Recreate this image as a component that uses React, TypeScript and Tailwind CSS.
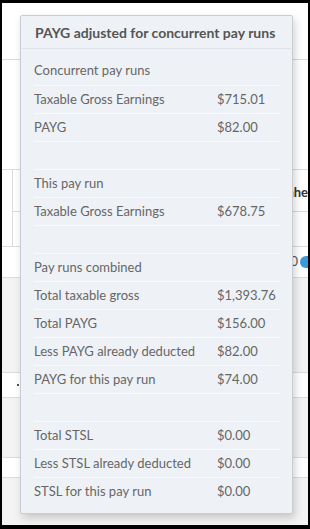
import React from "react";

type Row = { label: string; value?: string } | null;

const rows: Row[] = [
  { label: "Concurrent pay runs" },
  { label: "Taxable Gross Earnings", value: "$715.01" },
  { label: "PAYG", value: "$82.00" },
  null,
  { label: "This pay run" },
  { label: "Taxable Gross Earnings", value: "$678.75" },
  null,
  { label: "Pay runs combined" },
  { label: "Total taxable gross", value: "$1,393.76" },
  { label: "Total PAYG", value: "$156.00" },
  { label: "Less PAYG already deducted", value: "$82.00" },
  { label: "PAYG for this pay run", value: "$74.00" },
  null,
  { label: "Total STSL", value: "$0.00" },
  { label: "Less STSL already deducted", value: "$0.00" },
  { label: "STSL for this pay run", value: "$0.00" },
];

/* background page peeking out behind the popover */
const Background = () => (
  <div className="flex flex-col w-full h-full">
    <div className="h-[57px] border-b border-[#dcdcdc] bg-white" />
    <div className="h-[110px] border-b border-[#dcdcdc] bg-white" />
    <div className="h-[77px] flex bg-white border-b border-[#dcdcdc]">
      <div className="w-[11px] border-r border-[#dcdcdc]" />
      <div className="flex-1 flex flex-col">
        <div className="h-[42px] border-b border-[#dcdcdc] flex items-center justify-end pt-[4px]">
          <span className="font-bold text-[13px] text-[#333]">nhe</span>
        </div>
      </div>
    </div>
    <div className="h-[31px] bg-white border-b border-[#dcdcdc] flex items-center justify-end">
      <span className="text-[13px] text-[#555] mr-[1px]">0</span>
      <span className="w-[8px] h-[12px] rounded-l-full bg-[#3b9ad9] ml-[1px]" />
    </div>
    <div className="h-[95px] bg-[#f3f3f3] border-b border-[#dcdcdc]" />
    <div className="h-[25px] bg-white border-b border-[#dcdcdc] flex items-center">
      <span className="ml-[15px] w-[2px] h-[2px] bg-[#555]" />
    </div>
    <div className="h-[60px] bg-[#f3f3f3] border-b border-[#dcdcdc]" />
    <div className="h-[20px] bg-white border-b border-[#dcdcdc]" />
    <div className="flex-1 bg-[#f3f3f3]" />
  </div>
);

const Popover = () => (
  <div className="absolute left-[18px] top-[12px] w-[273px] h-[499px] bg-[#eef2f7] border border-[#c9ccd1] rounded-[2px] shadow-[2px_4px_8px_rgba(0,0,0,0.18)]">
    <div className="h-[33px] mx-[1px] border-b border-[#dfe3e9] flex items-center pl-[13px] text-[14px] font-bold text-[#555]">
      PAYG adjusted for concurrent pay runs
    </div>
    <div className="mx-[13px] mt-[8px] flex flex-col">
      {rows.map((r, i) => (
        <div
          key={i}
          className={`h-[28px] flex items-center text-[13px] text-[#666] ${
            i > 0 ? "border-t border-[#f8fafc]" : ""
          }`}
        >
          <span className="w-[183px]">{r?.label}</span>
          <span>{r?.value}</span>
        </div>
      ))}
    </div>
  </div>
);

export default function App() {
  return (
    <div
      className="w-[310px] h-[529px] bg-black pt-[3px] pl-[2px] pr-[2px] pb-[4px]"
      style={{ fontFamily: "Lato, 'Noto Sans', sans-serif" }}
    >
      <div className="relative w-full h-full bg-white overflow-hidden">
        <Background />
        <Popover />
      </div>
    </div>
  );
}
